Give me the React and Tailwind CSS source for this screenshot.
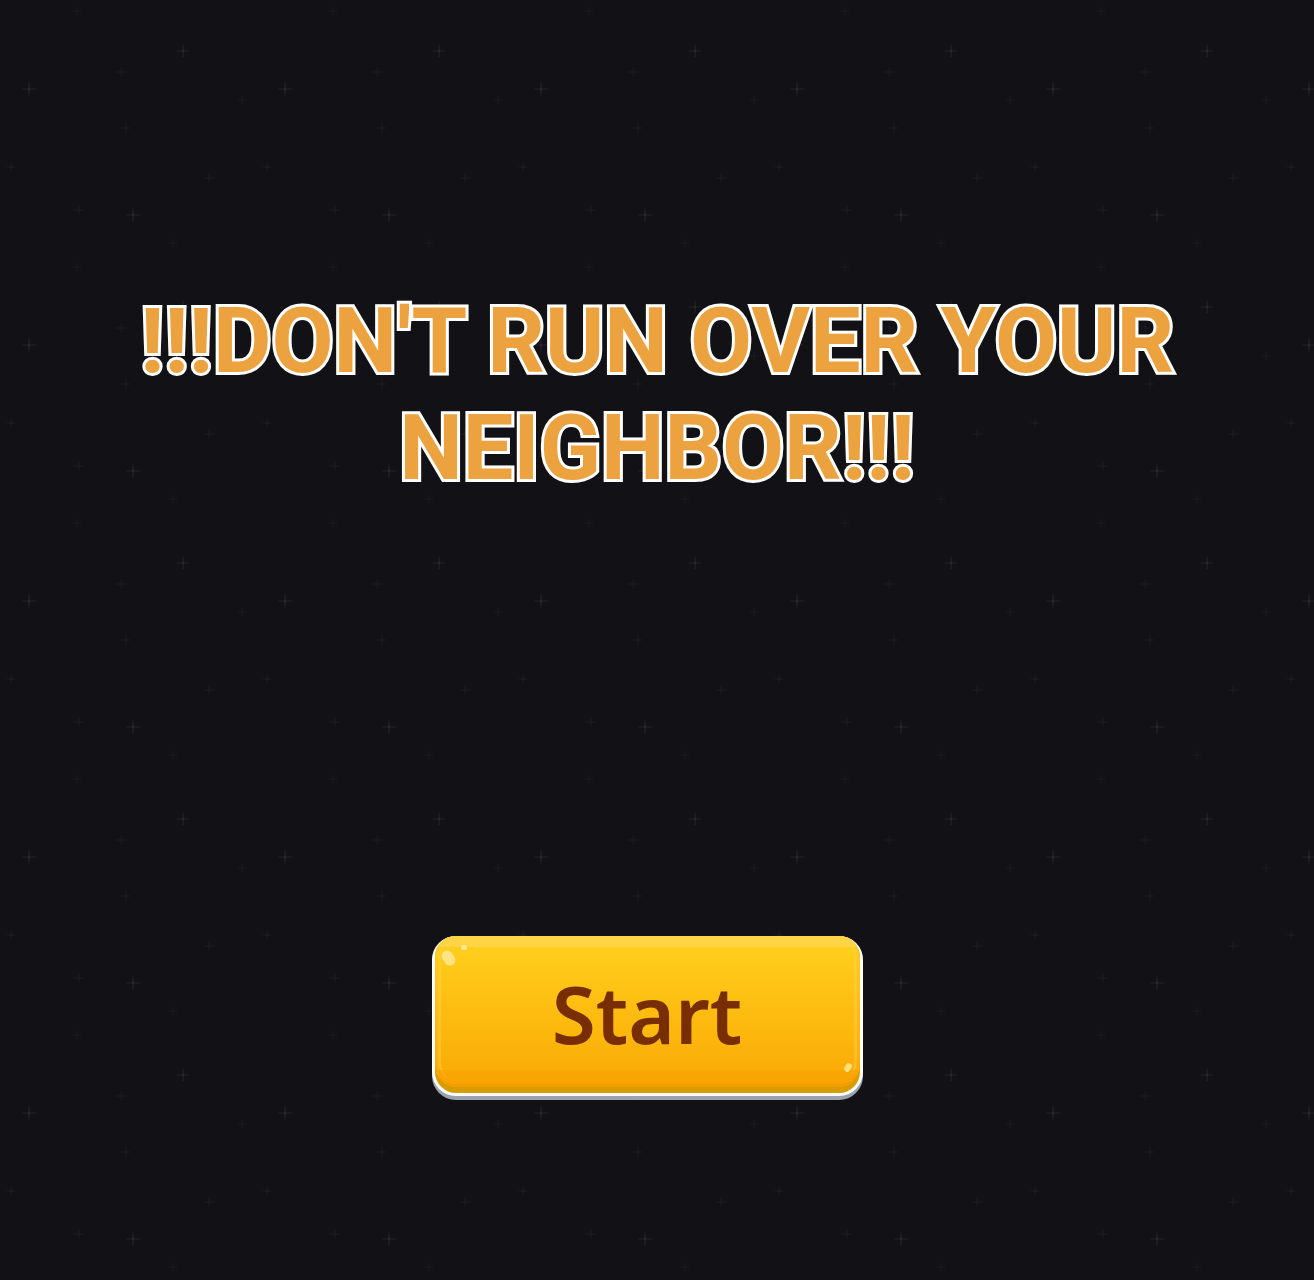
import React from "react";

// Faint sparkle field tiled across the backdrop
function Sparkles() {
  const big = [
    [183, 51],
    [29, 89],
    [133, 215],
  ];
  const mid = [
    [121, 72],
    [242, 100],
    [126, 128],
    [79, 210],
    [11, 167],
    [209, 178],
    [173, 243],
    [77, 11],
  ];
  return (
    <svg className="pointer-events-none absolute inset-0 h-full w-full" aria-hidden="true">
      <defs>
        <pattern id="sparkle-tile" width="256" height="256" patternUnits="userSpaceOnUse">
          {big.map(([x, y], i) => (
            <g key={"b" + i} stroke="#232227" strokeWidth="1.2" strokeLinecap="round">
              <line x1={x - 6} y1={y} x2={x + 6} y2={y} />
              <line x1={x} y1={y - 6} x2={x} y2={y + 6} />
              <circle cx={x} cy={y} r="1.3" fill="#2a292e" stroke="none" />
            </g>
          ))}
          {mid.map(([x, y], i) => (
            <g key={"m" + i} stroke="#1c1b20" strokeWidth="1" strokeLinecap="round">
              <line x1={x - 4} y1={y} x2={x + 4} y2={y} />
              <line x1={x} y1={y - 4} x2={x} y2={y + 4} />
            </g>
          ))}
        </pattern>
      </defs>
      <rect width="100%" height="100%" fill="url(#sparkle-tile)" />
    </svg>
  );
}

function StartButton() {
  return (
    <button
      type="button"
      className="relative block w-[431px] cursor-pointer rounded-[24px] bg-[#9aa3ad] pb-[4px]"
    >
      <div className="rounded-[24px] bg-white px-[3px] pb-[3px]">
        <div className="rounded-[21px] bg-[#d69c00] pb-[6px]">
          <div className="relative flex h-[151px] items-center justify-center overflow-hidden rounded-[21px] border-b-[3px] border-[#f59c00] bg-gradient-to-b from-[#ffd11e] via-[#fdbd10] to-[#f9aa05]">
            {/* top glossy band */}
            <div className="absolute inset-x-0 top-0 h-[11px] bg-[#ffd550]/80" />
            {/* soft inner rim */}
            <div className="absolute inset-[3px] rounded-[19px] border-x-[3px] border-[#ffd65a]/35" />
            {/* lower inner shade */}
            <div className="absolute inset-x-0 bottom-0 h-[14px] rounded-b-[18px] bg-[#f8a304]/70" />
            {/* highlight spots */}
            <div className="absolute left-[8px] top-[14px] h-[16px] w-[11px] -rotate-[35deg] rounded-full bg-[#ffe78f]/90" />
            <div className="absolute left-[26px] top-[9px] h-[5px] w-[6px] rounded-full bg-[#ffe78f]" />
            <div className="absolute bottom-[12px] right-[9px] h-[9px] w-[6px] rotate-[30deg] rounded-full bg-[#ffe27a]" />
            <span className="relative pt-[6px] font-['Noto_Sans',sans-serif] text-[80px] font-semibold leading-none text-[#782e00]">
              Start
            </span>
          </div>
        </div>
      </div>
    </button>
  );
}

export default function App() {
  return (
    <div className="relative min-h-screen w-full overflow-hidden bg-[#121115]">
      <Sparkles />
      <main className="relative flex flex-col items-center gap-[434px] pt-[288px]">
        <h1 className="text-center font-['Roboto',sans-serif] text-[90px] font-bold leading-[107px] text-[#eca23e] [-webkit-text-stroke:6px_#ffffff] [paint-order:stroke_fill]">
          !!!DON'T RUN OVER YOUR
          <br />
          NEIGHBOR!!!
        </h1>
        <div className="pr-[20px]">
          <StartButton />
        </div>
      </main>
    </div>
  );
}
